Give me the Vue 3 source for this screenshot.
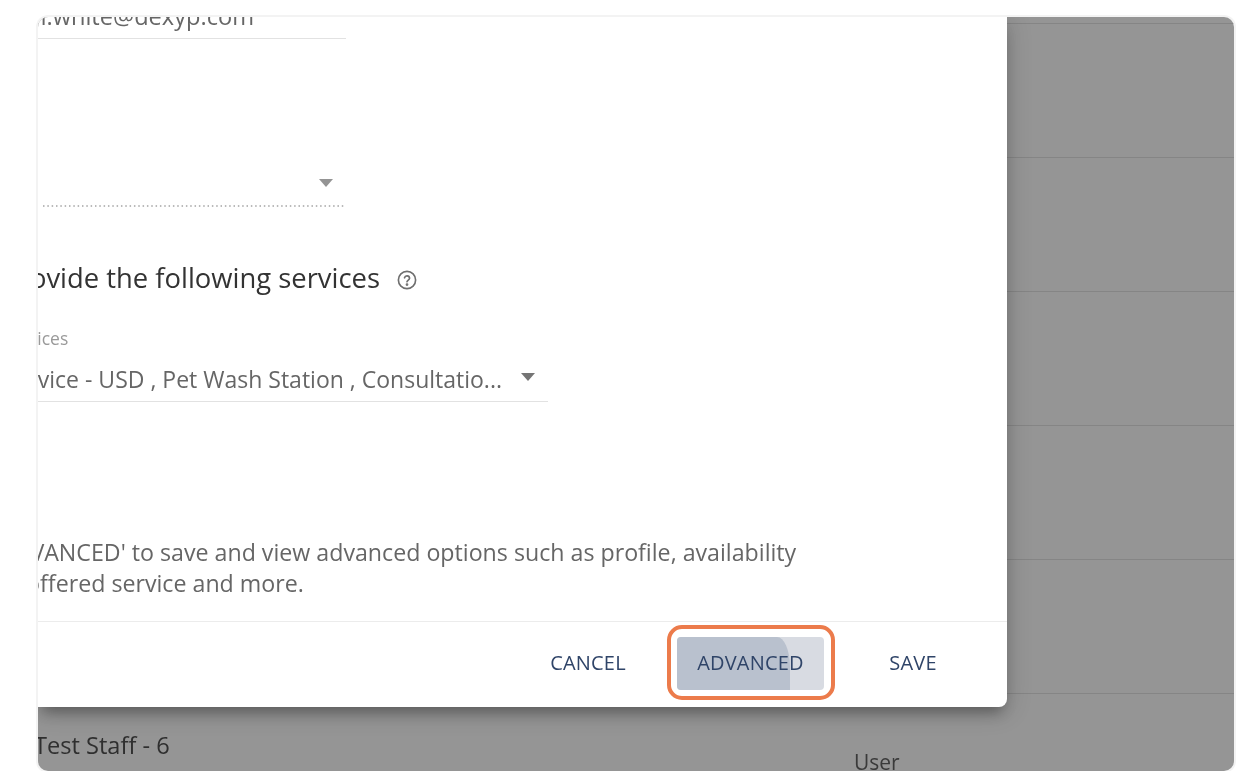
<template>
  <div class="frame">
    <div class="rows">
      <div class="row first"></div>
      <div class="row"></div>
      <div class="row"></div>
      <div class="row"></div>
      <div class="row"></div>
      <div class="row"></div>
      <div class="row last">
        <span class="staff">Test Staff - 6</span>
        <span class="role">User</span>
      </div>
    </div>
    <div class="modal">
      <div class="body">
        <div class="content">
          <div class="field email">
            <span class="email-text">john.white@dexyp.com</span>
          </div>
          <div class="field disabled">
            <svg class="caret" width="14" height="8" viewBox="0 0 14 8"><path d="M0 0h14L7 8z" fill="#949494" /></svg>
            <svg class="dots" width="301" height="2" viewBox="0 0 301 2"><line x1="0" y1="1" x2="301" y2="1" stroke="#a4a4a4" stroke-width="1.6" stroke-dasharray="1.5 2.83" /></svg>
          </div>
          <div class="heading">
            <span>I can provide the following services</span>
            <svg class="help" width="22" height="22" viewBox="0 0 24 24" fill="none" stroke="#6f6f6f" stroke-width="1.8">
              <circle cx="12" cy="12" r="9.4" />
              <path d="M9.3 9.6a2.8 2.8 0 0 1 5.5.4c0 1.9-2.8 2.2-2.8 4" stroke-linecap="round" />
              <circle cx="12" cy="17" r=".6" fill="#6f6f6f" />
            </svg>
          </div>
          <div class="label">Services</div>
          <div class="field select">
            <span class="select-text">Test Service - USD , Pet Wash Station , Consultatio...</span>
            <svg class="caret" width="14" height="8" viewBox="0 0 14 8"><path d="M0 0h14L7 8z" fill="#757575" /></svg>
          </div>
          <p class="note">Click on 'ADVANCED' to save and view advanced options such as profile, availability<br /><span class="note-second">for certain offered service and more.</span></p>
        </div>
      </div>
      <div class="footer">
        <button class="btn cancel">CANCEL</button>
        <div class="ring">
          <button class="btn advanced"><i class="ripple"></i><span>ADVANCED</span></button>
        </div>
        <button class="btn save">SAVE</button>
      </div>
    </div>
  </div>
</template>

<script setup>
</script>

<style>
html, body { margin: 0; background: #fff; }
</style>

<style scoped>
.frame {
  position: relative;
  width: 1196px;
  height: 754px;
  margin: 17px 0 0 38px;
  overflow: hidden;
  background: #959595;
  border-radius: 10px;
  font-family: "Open Sans", "Noto Sans", sans-serif;
  box-shadow: 0 0 0 2px #f3f3f3;
  filter: blur(.4px);
}
.rows { display: flex; flex-direction: column; }
.row { height: 134px; box-sizing: border-box; border-bottom: 1.5px solid #858585; }
.row.first { height: 7px; }
.row.last { position: relative; border: 0; }
.staff { position: absolute; left: -4px; top: 35px; font-size: 23.6px; line-height: 32px; color: #2f2f2f; white-space: nowrap; }
.role { position: absolute; left: 816px; top: 53px; font-size: 21px; line-height: 30px; color: #3a3a3a; }
.modal {
  position: absolute;
  left: 0;
  top: 0;
  width: 969px;
  height: 690px;
  display: flex;
  flex-direction: column;
  background: #fff;
  border-radius: 0 0 8px 0;
  box-shadow: 0 10px 14px -5px rgba(0, 0, 0, .3), 0 4px 24px 2px rgba(0, 0, 0, .16);
}
.body { flex: 1; overflow: hidden; min-height: 0; }
.content { margin-left: -100px; margin-top: -12px; }
.field { position: relative; display: flex; }
.email { width: 408px; height: 33px; justify-content: flex-end; border-bottom: 1.5px solid #e2e2e2; }
.email-text { font-size: 23.6px; line-height: 28px; color: #666; margin: -3px 92px 0 0; white-space: nowrap; }
.disabled {
  width: 301px;
  height: 168px;
  margin-left: 105px;
  align-items: flex-end;
}
.disabled .caret { position: absolute; right: 11px; top: 140px; }
.dots { display: block; }
.heading { display: flex; align-items: center; justify-content: flex-end; width: 480px; height: 34px; margin-top: 53px; font-size: 27.4px; color: #333; white-space: nowrap; }
.help { margin-left: 16px; position: relative; top: 3px; flex: none; }
.label { margin-top: 34px; margin-left: 64px; font-size: 17.5px; line-height: 20px; color: #9a9a9a; white-space: nowrap; }
.select { width: 610px; height: 44px; align-items: center; border-bottom: 1.5px solid #e2e2e2; margin-top: 9px; justify-content: flex-end; }
.select-text { font-size: 23px; color: #666; white-space: nowrap; flex: none; }
.select .caret { margin: 0 13px 0 19px; position: relative; top: -2px; flex: none; }
.note { margin: 135px 0 0 -34px; font-size: 23.2px; line-height: 31px; color: #666; white-space: nowrap; }
.note-second { margin-left: 4px; }
.footer {
  display: flex;
  align-items: center;
  height: 85px;
  border-top: 1.5px solid #ececec;
  position: relative;
}
.btn {
  position: absolute;
  top: 14px;
  height: 53px;
  border: 0;
  padding: 0;
  background: none;
  font: 400 20px "Open Sans", sans-serif;
  color: #2f4468;
  letter-spacing: .2px;
}
.cancel { left: 491px; width: 118px; }
.save { left: 828px; width: 94px; }
.ring {
  position: absolute;
  left: 629px;
  top: 3px;
  width: 160px;
  height: 67px;
  border: 4px solid #ec7b4b;
  border-radius: 15px;
}
.advanced {
  position: absolute;
  left: 6px;
  top: 8px;
  width: 147px;
  height: 53px;
  background: #d8dbe2;
  border-radius: 4px;
  overflow: hidden;
}
.advanced span { position: relative; top: -1px; }
.ripple {
  position: absolute;
  left: 0;
  top: 0;
  width: 113px;
  height: 53px;
  background: #b9c1ce;
  border-top-right-radius: 13px 30px;
}
</style>
